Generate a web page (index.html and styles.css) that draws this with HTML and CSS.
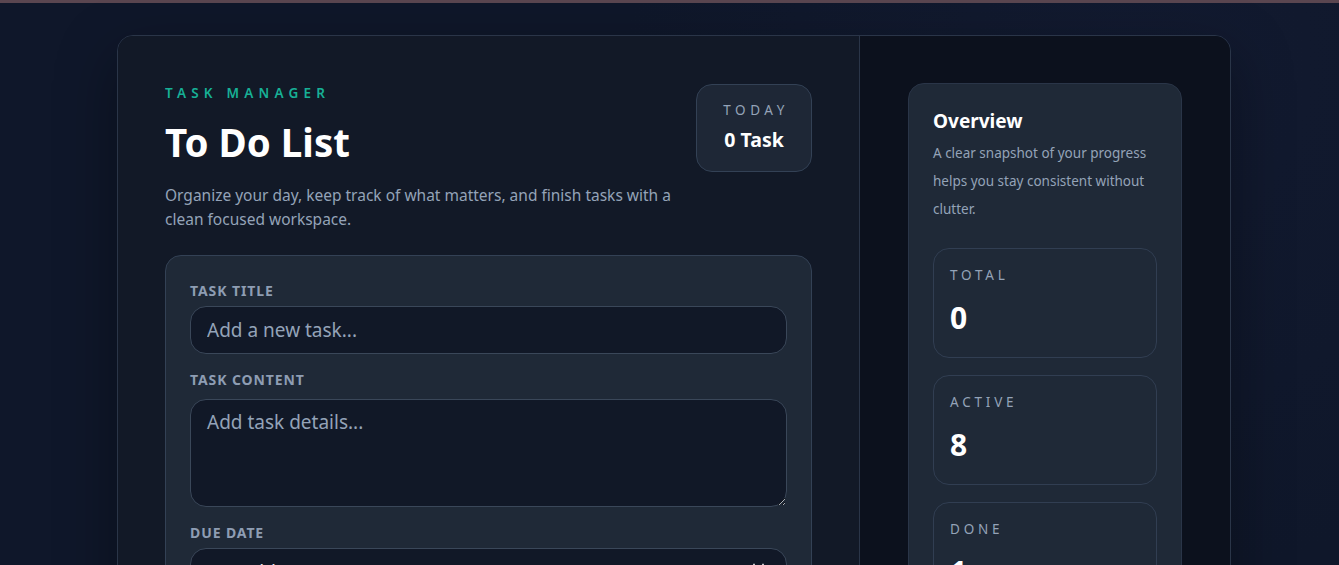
FILE: index.html
```html
<!DOCTYPE html>
<html lang="en">
<head>
  <meta charset="UTF-8">
  <meta name="viewport" content="width=device-width, initial-scale=1.0">
  <title>To Do List</title>
  <link rel="stylesheet" href="styles.css">
</head>
<body>
  <div class="topbar"></div>
  <div class="app">
    <main class="main">
      <header class="header">
        <div class="intro">
          <p class="eyebrow">Task Manager</p>
          <h1>To Do List</h1>
          <p class="lead">Organize your day, keep track of what matters, and finish tasks with a clean focused workspace.</p>
        </div>
        <div class="today">
          <span class="today-label">Today</span>
          <strong class="today-count">0 Task</strong>
        </div>
      </header>

      <form class="task-form" id="taskForm">
        <div class="form-group">
          <label for="title">Task Title</label>
          <input type="text" id="title" placeholder="Add a new task...">
        </div>
        <div class="form-group">
          <label for="content">Task Content</label>
          <textarea id="content" placeholder="Add task details..."></textarea>
        </div>
        <div class="form-group">
          <label for="due">Due Date</label>
          <input type="date" id="due">
        </div>
      </form>
    </main>

    <aside class="side">
      <div class="overview">
        <h2>Overview</h2>
        <p>A clear snapshot of your progress helps you stay consistent without clutter.</p>
        <div class="stats">
          <div class="stat">
            <span class="stat-label">Total</span>
            <strong class="stat-value">0</strong>
          </div>
          <div class="stat">
            <span class="stat-label">Active</span>
            <strong class="stat-value">8</strong>
          </div>
          <div class="stat">
            <span class="stat-label">Done</span>
            <strong class="stat-value">1</strong>
          </div>
        </div>
      </div>
    </aside>
  </div>
</body>
</html>
```

FILE: styles.css
```css
* {
  box-sizing: border-box;
}
body {
  margin: 0;
  padding-left: 9px;
  font-family: "Noto Sans", "Open Sans", sans-serif;
  background-color: #0f172a;
  background-image: radial-gradient(circle at 85% 10%, #121a30 0, #0f172a 40%);
  color: #f8fafc;
  min-height: 100vh;
  overflow: hidden;
}
.topbar {
  height: 3px;
  margin-left: -9px;
  background-color: #5a4650;
}
.app {
  width: 1114px;
  margin: 32px auto 0;
  display: grid;
  grid-template-columns: 742px 1fr;
  border: 1px solid #2a3548;
  border-radius: 16px;
  overflow: hidden;
  box-shadow: 0 20px 60px rgba(0, 0, 0, 0.35);
  height: 620px;
}
.main {
  background-color: #121927;
  padding: 48px 47px 0 47px;
  border-right: 1px solid #2a3548;
}
.side {
  background-color: #0c111d;
  padding: 47px 48px 0 48px;
}
.header {
  display: flex;
  justify-content: space-between;
  align-items: flex-start;
}
.eyebrow {
  margin: 0;
  font-size: 13.5px;
  line-height: 18px;
  font-weight: 600;
  letter-spacing: 5.2px;
  text-transform: uppercase;
  color: #17b096;
}
h1 {
  margin: 16px 0 0;
  font-size: 38.5px;
  line-height: 48px;
  font-weight: 700;
  color: #ffffff;
}
.lead {
  margin: 17px 0 0;
  max-width: 512px;
  font-size: 15.5px;
  line-height: 24px;
  color: #94a3b8;
}
.today {
  display: flex;
  flex-direction: column;
  align-items: center;
  margin-top: 0;
  padding: 15px 26px 18px;
  background-color: #1e2736;
  border: 1px solid #334155;
  border-radius: 16px;
}
.today-label {
  font-size: 13.5px;
  letter-spacing: 4.6px;
  margin-right: -4px;
  text-transform: uppercase;
  color: #94a3b8;
  line-height: 20px;
}
.today-count {
  margin-top: 7px;
  font-size: 19.5px;
  line-height: 26px;
  color: #ffffff;
}
.task-form {
  margin-top: 24px;
  padding: 23px 24px 0;
  background-color: #1f2937;
  border: 1px solid #334155;
  border-radius: 16px;
  height: 400px;
}
.form-group {
  margin-bottom: 17px;
}
label {
  display: block;
  margin-top: 3px;
  margin-bottom: 6px;
  font-size: 14px;
  line-height: 18px;
  font-weight: 700;
  letter-spacing: 0.9px;
  text-transform: uppercase;
  color: #8e9db3;
}
input, textarea {
  display: block;
  width: 100%;
  height: 48px;
  padding: 0 16px;
  font-family: inherit;
  font-size: 19px;
  color: #e2e8f0;
  background-color: #111827;
  border: 1px solid #3a4759;
  border-radius: 16px;
  outline: none;
  color-scheme: dark;
}
textarea {
  margin-top: 10px;
  height: 108px;
  padding: 9px 16px;
  resize: vertical;
}
input::placeholder, textarea::placeholder {
  color: #94a3b8;
}
.overview {
  padding: 24px 24px 0;
  background-color: #1f2937;
  border: 1px solid #2a3548;
  border-radius: 16px;
  height: 600px;
}
h2 {
  margin: 0;
  font-size: 19px;
  line-height: 26px;
  font-weight: 700;
  color: #ffffff;
}
.overview p {
  margin: 5px 0 0;
  font-size: 13.5px;
  line-height: 28px;
  color: #94a3b8;
}
.stats {
  margin-top: 25px;
  display: flex;
  flex-direction: column;
  gap: 17px;
}
.stat {
  height: 110px;
  padding: 16px 16px 0;
  border: 1px solid #313e52;
  border-radius: 16px;
  background-color: #1f2937;
}
.stat-label {
  display: block;
  font-size: 13.5px;
  line-height: 20px;
  letter-spacing: 3.8px;
  text-transform: uppercase;
  color: #94a3b8;
}
.stat-value {
  display: block;
  margin-top: 13px;
  font-size: 30px;
  line-height: 40px;
  color: #ffffff;
}
```
